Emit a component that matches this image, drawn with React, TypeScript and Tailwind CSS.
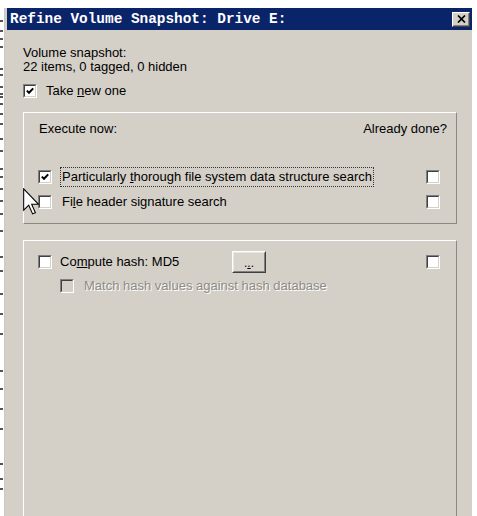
import React from 'react'

const Check = ({ checked = false, disabled = false }: { checked?: boolean; disabled?: boolean }) => (
	<span className="w-[14px] h-[14px] shrink-0 flex border border-t-[#808080] border-l-[#808080] border-r-white border-b-white">
		<span className={`flex-1 flex items-center justify-center border border-t-[#404040] border-l-[#404040] border-r-[#d4d0c8] border-b-[#d4d0c8] ${disabled ? 'bg-[#d4d0c8]' : 'bg-white'}`}>
			{checked && (
				<svg width="8" height="8" viewBox="0 0 8 8">
					<polyline points="0.8,3.6 3,5.8 7.2,1.4" fill="none" stroke="#000" strokeWidth="2" />
				</svg>
			)}
		</span>
	</span>
)

const Cursor = () => (
	<svg width="16" height="27" viewBox="0 0 12 20" className="absolute left-[18px] top-[180px]">
		<path d="M0.5 0.5 V16.5 L4.3 12.8 L7.2 19.3 L9.3 18.4 L6.5 12 H11.5 Z" fill="#fff" stroke="#000" strokeWidth="0.8" strokeLinejoin="miter" />
	</svg>
)

const App = () => {
	// dark ticks of the window sitting behind the dialog
	const marks = [12, 22, 30, 38, 60, 66, 78, 85, 88, 95, 105, 115, 130, 142, 160, 168, 180, 192, 205, 222, 248, 262, 285, 305, 325, 362, 380, 400, 420, 455, 470, 480]

	return (
		<div className="w-[477px] h-[516px] overflow-hidden bg-white flex flex-col font-['Liberation_Sans',Arial,sans-serif] text-[13px] leading-[14px] text-black">
			<div className="h-[8px] shrink-0 bg-white" />

			<div className="flex flex-1 min-h-0">
				<div className="w-[5px] shrink-0 relative bg-white border-r border-[#c8c8c8]">
					{marks.map((y, i) => (
						<span key={i} className="absolute left-0 w-[3px] h-[2px] bg-[#555]" style={{ top: y }} />
					))}
				</div>

				{/* dialog */}
				<div className="w-[467px] shrink-0 bg-[#d4d0c8] flex flex-col relative">
					<div className="h-[22px] ml-[2px] bg-[#0a246a] flex items-center justify-between pl-[3px] pr-[2px] shrink-0">
						<span className="font-['Liberation_Mono',monospace] font-bold text-[14.4px] leading-[14px] text-white">
							Refine Volume Snapshot: Drive E:
						</span>
						<span className="w-[18px] h-[15px] flex border border-t-white border-l-white border-r-[#404040] border-b-[#404040]">
							<span className="flex-1 flex items-center justify-center border border-t-[#d4d0c8] border-l-[#d4d0c8] border-r-[#808080] border-b-[#808080] bg-[#d4d0c8]">
								<svg width="9" height="8" viewBox="0 0 9 8">
									<path d="M1 0.5 L8 7.5 M8 0.5 L1 7.5" stroke="#000" strokeWidth="1.7" />
								</svg>
							</span>
						</span>
					</div>

					<div className="flex flex-col pl-[18px] pr-[15px] pt-[16px]">
						<p>Volume snapshot:</p>
						<p>22 items, 0 tagged, 0 hidden</p>
						<label className="flex items-center h-[14px] mt-[10px]">
							<Check checked />
							<span className="ml-[9px]">Take <u>n</u>ew one</span>
						</label>

						{/* execute now */}
						<div className="mt-[14px] w-[434px] border border-t-white border-l-white border-r-[#8c8983] border-b-[#8c8983] flex flex-col pb-[14px]">
							<div className="flex justify-between pl-[15px] pr-[9px] pt-[9px]">
								<span>Execute now:</span>
								<span>Already done?</span>
							</div>
							<div className="flex items-center justify-between h-[14px] mt-[34px] pl-[14px] pr-[16px]">
								<div className="flex items-center">
									<Check checked />
									<span className="ml-[8px] border border-dotted border-[#333] px-[1px] py-[2px]">
										Particularly <u>t</u>horough file system data structure search
									</span>
								</div>
								<Check />
							</div>
							<div className="flex items-center justify-between h-[14px] mt-[11px] pl-[14px] pr-[16px]">
								<div className="flex items-center">
									<Check />
									<span className="ml-[10px]">Fi<u>l</u>e header signature search</span>
								</div>
								<Check />
							</div>
						</div>

						{/* hash */}
						<div className="mt-[16px] w-[434px] h-[300px] border border-t-white border-l-white border-r-[#8c8983] border-b-[#8c8983] flex flex-col pt-[10px]">
							<div className="flex items-center justify-between h-[22px] pl-[14px] pr-[16px]">
								<div className="flex items-center">
									<Check />
									<span className="ml-[8px] w-[172px]">Co<u>m</u>pute hash: MD5</span>
									<span className="w-[34px] h-[22px] flex border border-t-white border-l-white border-r-[#404040] border-b-[#404040]">
										<span className="flex-1 flex items-center justify-center border border-t-[#e8e6e0] border-l-[#e8e6e0] border-r-[#808080] border-b-[#808080] bg-[#d8d4cc] text-[12px] leading-[12px] pt-[2px]">
											.<u>.</u>.
										</span>
									</span>
								</div>
								<Check />
							</div>
							<div className="flex items-center h-[14px] mt-[6px] pl-[36px]">
								<Check disabled />
								<span className="ml-[10px] text-[#8e8b85] [text-shadow:1px_1px_0_#ffffff]">
									Match hash values against hash database
								</span>
							</div>
						</div>
					</div>

					<Cursor />
				</div>

				<div className="flex-1 bg-white" />
			</div>
		</div>
	)
}

export default App
